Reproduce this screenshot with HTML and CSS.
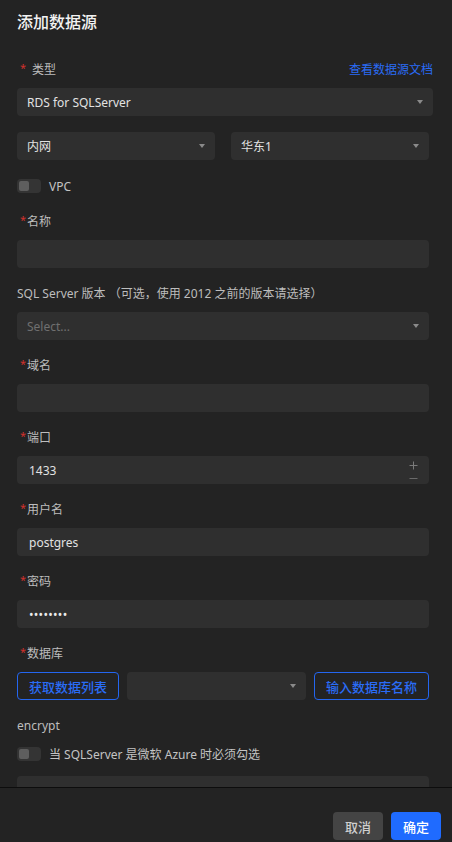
FILE: index.html
```html
<!DOCTYPE html>
<html lang="zh-CN">
<head>
    <meta charset="UTF-8">
    <meta name="viewport" content="width=device-width, initial-scale=1.0">
    <title>添加数据源</title>
    <link rel="stylesheet" href="styles.css">
</head>
<body>
<div class="dialog">
    <div class="dialog-body">
        <h2 class="title">添加数据源</h2>

        <div class="field first">
            <div class="label-row">
                <span class="label req wide-star">类型</span>
                <a class="link">查看数据源文档</a>
            </div>
            <div class="select">RDS for SQLServer<span class="caret"></span></div>
        </div>

        <div class="pair">
            <div class="select">内网<span class="caret"></span></div>
            <div class="select">华东1<span class="caret"></span></div>
        </div>

        <div class="switch-row top">
            <span class="switch"><span class="knob"></span></span>
            <span class="switch-text">VPC</span>
        </div>

        <div class="field">
            <div class="label req">名称</div>
            <div class="input"></div>
        </div>

        <div class="field">
            <div class="label">SQL Server 版本 （可选，使用 2012 之前的版本请选择）</div>
            <div class="select placeholder">Select...<span class="caret"></span></div>
        </div>

        <div class="field">
            <div class="label req">域名</div>
            <div class="input"></div>
        </div>

        <div class="field">
            <div class="label req">端口</div>
            <div class="input number">
                <span>1433</span>
                <span class="stepper">
                    <svg width="9" height="9" viewBox="0 0 9 9"><path d="M4.5 0.5v8M0.5 4.5h8" stroke="#7a7a7a" stroke-width="1"/></svg>
                    <svg width="9" height="3" viewBox="0 0 9 3"><path d="M0.5 1.5h8" stroke="#6a6a6a" stroke-width="1"/></svg>
                </span>
            </div>
        </div>

        <div class="field">
            <div class="label req">用户名</div>
            <div class="input">postgres</div>
        </div>

        <div class="field">
            <div class="label req">密码</div>
            <div class="input secret">••••••••</div>
        </div>

        <div class="field">
            <div class="label req">数据库</div>
            <div class="db-row">
                <button class="btn-outline">获取数据列表</button>
                <div class="select grow"><span class="caret"></span></div>
                <button class="btn-outline">输入数据库名称</button>
            </div>
        </div>

        <div class="label">encrypt</div>
        <div class="switch-row">
            <span class="switch"><span class="knob"></span></span>
            <span class="switch-text">当 SQLServer 是微软 Azure 时必须勾选</span>
        </div>
        <div class="input cut"></div>
    </div>

    <div class="dialog-footer">
        <button class="btn btn-cancel">取消</button>
        <button class="btn btn-ok">确定</button>
    </div>
</div>
</body>
</html>
```

FILE: styles.css
```css
* {
    box-sizing: border-box;
}
body {
    margin: 0;
    background-color: #232323;
    font-family: "Noto Sans", "Noto Sans CJK SC", sans-serif;
    font-size: 12px;
    color: #c4c4c4;
}
.dialog {
    height: 842px;
    display: flex;
    flex-direction: column;
}
.dialog-body {
    height: 787px;
    overflow: hidden;
    padding: 10px 23px 0 17px;
}
.title {
    margin: 0 0 26px 0;
    font-size: 16px;
    line-height: 24px;
    font-weight: 500;
    color: #f2f2f2;
}
.field {
    margin-bottom: 16px;
}
.field.first {
    margin-right: -4px;
}
.label-row {
    display: flex;
    justify-content: space-between;
    align-items: center;
}
.label {
    display: block;
    line-height: 20px;
    margin-bottom: 8px;
    color: #bdbdbd;
}
.req::before {
    content: "*";
    color: #d0312d;
    margin: 0 1px 0 3px;
    font-size: 11px;
    position: relative;
    top: -2px;
}
.wide-star::before {
    margin-right: 6px;
}
.link {
    color: #2a6cf6;
    margin-bottom: 8px;
    line-height: 20px;
    cursor: pointer;
}
.select, .input {
    height: 28px;
    border-radius: 4px;
    background-color: #2f2f2f;
    display: flex;
    align-items: center;
    color: #e2e2e2;
}
.select {
    padding: 0 10px;
    justify-content: space-between;
}
.placeholder {
    color: #6f6f6f;
}
.caret {
    width: 0;
    height: 0;
    margin-left: auto;
    border-left: 3.5px solid transparent;
    border-right: 3.5px solid transparent;
    border-top: 4px solid #8a8a8a;
}
.pair {
    display: grid;
    grid-template-columns: 1fr 1fr;
    gap: 16px;
}
.switch-row {
    display: flex;
    align-items: center;
    gap: 8px;
    height: 20px;
}
.switch-row.top {
    margin: 16px 0 16px 0;
}
.switch {
    width: 24px;
    height: 14px;
    border-radius: 4px;
    background-color: #343434;
    padding: 2px;
    display: flex;
}
.knob {
    width: 10px;
    height: 10px;
    border-radius: 2px;
    background-color: #5e5e5e;
}
.switch-text {
    color: #c4c4c4;
}
.input {
    padding: 0 12px;
}
.number {
    justify-content: space-between;
    padding-right: 11px;
}
.stepper {
    display: flex;
    flex-direction: column;
    align-items: center;
    gap: 7px;
}
.stepper svg {
    display: block;
}
.secret {
    font-size: 12px;
    letter-spacing: 0.3px;
    color: #ececec;
}
.db-row {
    display: flex;
    gap: 8px;
}
.grow {
    flex: 1;
    padding-right: 10px;
}
.btn-outline {
    height: 28px;
    padding: 0 11px;
    border: 1px solid #2466f0;
    border-radius: 4px;
    background: transparent;
    color: #2a6cf6;
    font-family: "Noto Sans CJK SC", sans-serif;
    font-size: 13px;
    font-weight: 500;
}
.switch-row + .input.cut {
    margin-top: 12px;
}
.dialog-footer {
    flex: 1;
    border-top: 1px solid #0d0d0d;
    display: flex;
    justify-content: flex-end;
    align-items: flex-start;
    gap: 8px;
    padding: 24px 11px 0 0;
}
.btn {
    height: 28px;
    width: 50px;
    border: none;
    border-radius: 4px;
    font-family: "Noto Sans CJK SC", sans-serif;
    font-size: 13px;
    font-weight: 500;
}
.btn-cancel {
    background-color: #444444;
    color: #cfcfcf;
}
.btn-ok {
    background-color: #1f6bff;
    color: #ffffff;
}
```
